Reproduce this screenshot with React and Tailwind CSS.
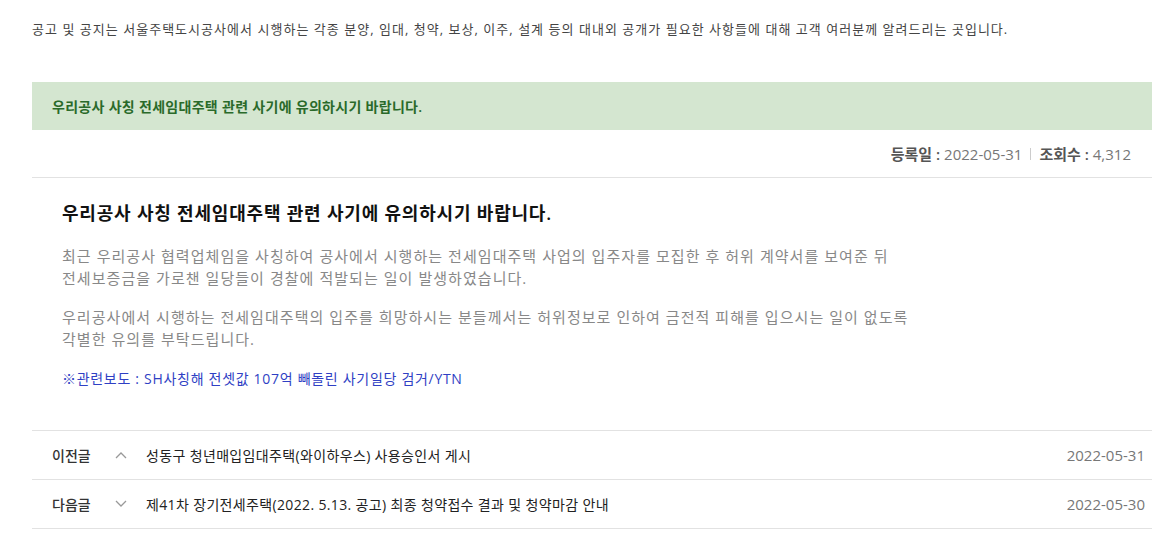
import React from "react";

const font = { fontFamily: '"Open Sans", "Noto Sans CJK KR", sans-serif' };

function Chevron({ up }) {
  return (
    <svg width="14" height="14" viewBox="0 0 14 14" className="text-[#999]">
      <path
        d={up ? "M2 10 L7 5 L12 10" : "M2 4 L7 9 L12 4"}
        fill="none"
        stroke="currentColor"
        strokeWidth="1.3"
      />
    </svg>
  );
}

function NavRow({ label, up, title, date }) {
  return (
    <div className="flex items-center h-[49px] border-b border-[#e2e2e2]">
      <span className="w-[68px] pl-5 text-[14px] font-medium text-[#333]">{label}</span>
      <span className="w-[46px] flex justify-start pl-[14px]">
        <Chevron up={up} />
      </span>
      <span className="flex-1 text-[14px] text-[#222] tracking-[0.35px]">{title}</span>
      <span className="pr-[7px] text-[15px] text-[#777]">{date}</span>
    </div>
  );
}

export default function App() {
  return (
    <div className="bg-white w-[1173px] h-[545px] overflow-hidden" style={font}>
      <div className="pl-8 pr-[21px]">
        <p className="pt-[19px] text-[13px] text-[#444] tracking-[1.03px] leading-[20px]">
          공고 및 공지는 서울주택도시공사에서 시행하는 각종 분양, 임대, 청약, 보상, 이주, 설계 등의 대내외 공개가 필요한 사항들에 대해 고객 여러분께 알려드리는 곳입니다.
        </p>
        <div className="mt-[43px] h-[48px] bg-[#d4e6d0] flex items-center pl-5">
          <span className="text-[14px] font-semibold text-[#2a6a2a] tracking-[0.3px]">
            우리공사 사칭 전세임대주택 관련 사기에 유의하시기 바랍니다.
          </span>
        </div>
        <div className="h-[48px] border-b border-[#e2e2e2] flex items-center justify-end pr-[21px] pt-[1px] text-[15px]">
          <span className="font-semibold text-[#555]">등록일 :</span>
          <span className="ml-1 text-[#777]">2022-05-31</span>
          <span className="mx-[8px] h-[12px] w-px bg-[#ccc]"></span>
          <span className="font-semibold text-[#555]">조회수 :</span>
          <span className="ml-1 text-[#777]">4,312</span>
        </div>
        <div className="pl-[30px] pt-[21px] pb-[40px]">
          <h2 className="text-[18px] font-semibold text-[#111] leading-[28px] tracking-[0.8px]">
            우리공사 사칭 전세임대주택 관련 사기에 유의하시기 바랍니다.
          </h2>
          <p className="mt-[18px] text-[15px] text-[#888] leading-[22px] tracking-[1.05px]">
            최근 우리공사 협력업체임을 사칭하여 공사에서 시행하는 전세임대주택 사업의 입주자를 모집한 후 허위 계약서를 보여준 뒤
            <br />
            전세보증금을 가로챈 일당들이 경찰에 적발되는 일이 발생하였습니다.
          </p>
          <p className="mt-[17px] text-[15px] text-[#888] leading-[22px] tracking-[1.05px]">
            우리공사에서 시행하는 전세임대주택의 입주를 희망하시는 분들께서는 허위정보로 인하여 금전적 피해를 입으시는 일이 없도록
            <br />
            각별한 유의를 부탁드립니다.
          </p>
          <p className="mt-[18px] text-[14px] text-[#2f3fc4] leading-[22px] tracking-[0.7px]">
            ※관련보도 : SH사칭해 전셋값 107억 빼돌린 사기일당 검거/YTN
          </p>
        </div>
        <div className="border-t border-[#e2e2e2]">
          <NavRow label="이전글" up title="성동구 청년매입임대주택(와이하우스) 사용승인서 게시" date="2022-05-31" />
          <NavRow
            label="다음글"
            up={false}
            title="제41차 장기전세주택(2022. 5.13. 공고) 최종 청약접수 결과 및 청약마감 안내"
            date="2022-05-30"
          />
        </div>
      </div>
    </div>
  );
}
